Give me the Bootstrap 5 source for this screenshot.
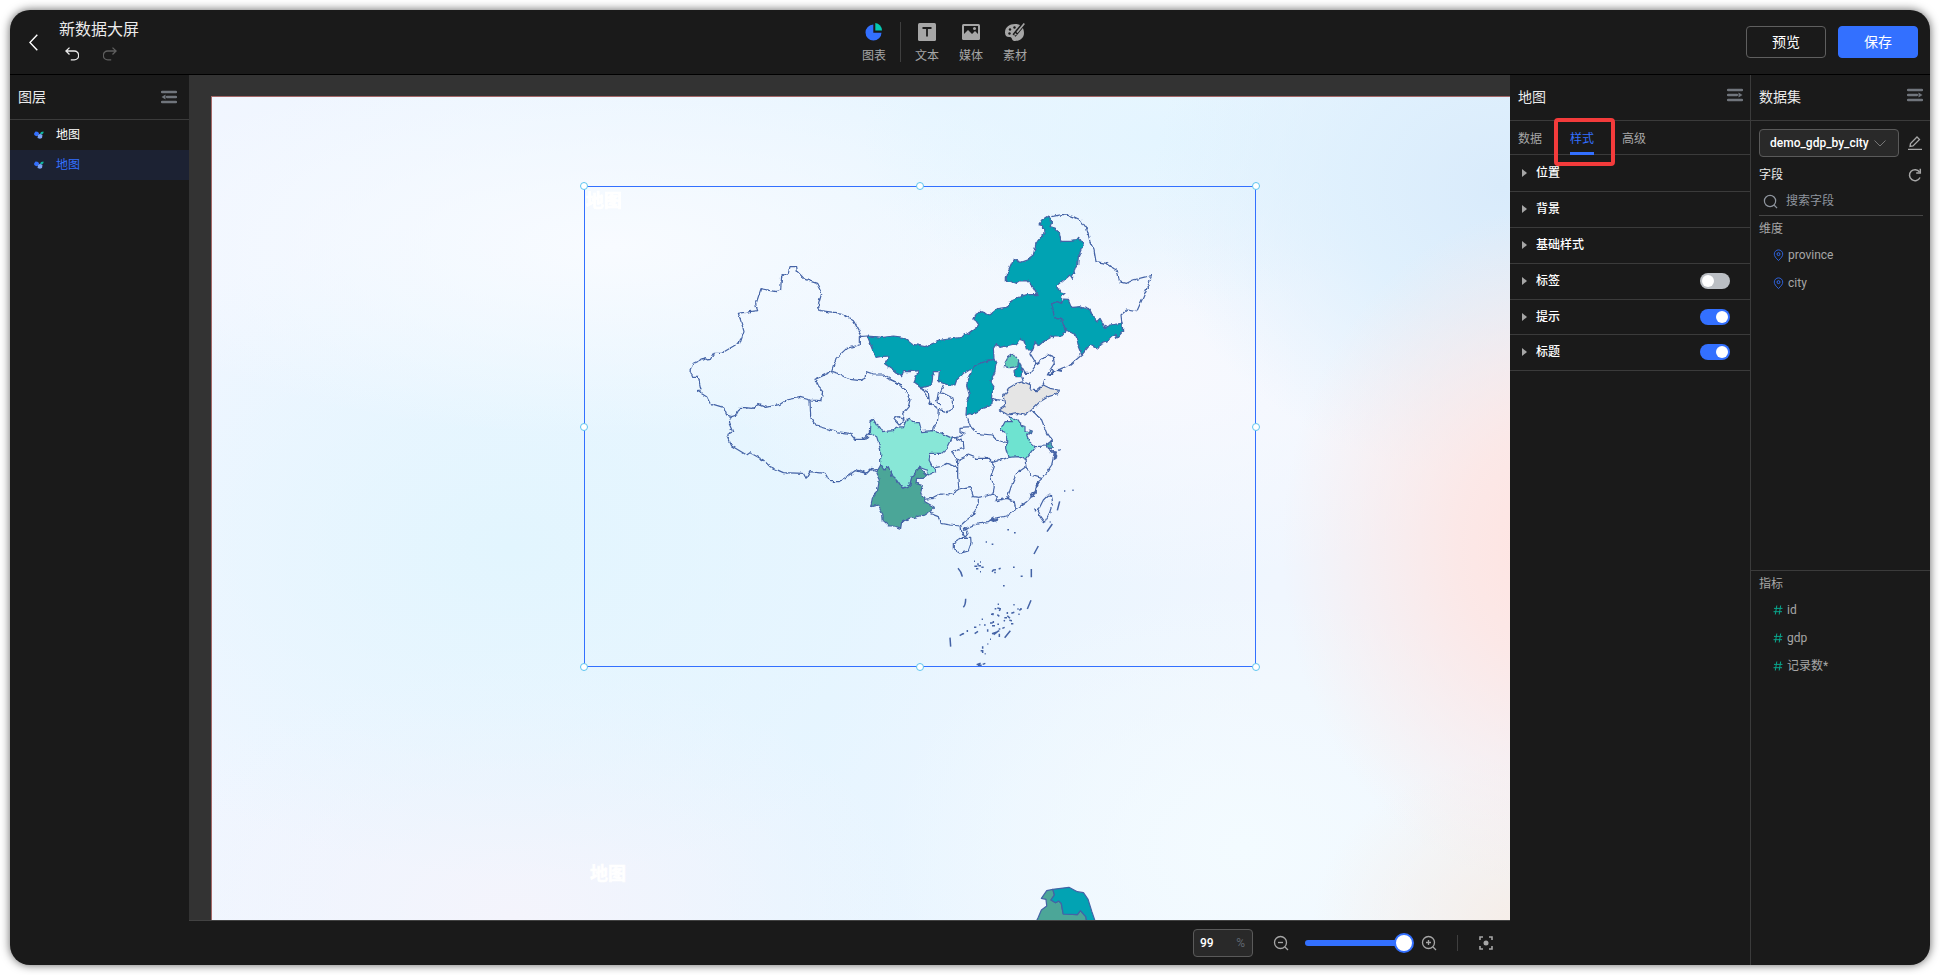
<!DOCTYPE html>
<html lang="zh-CN">
<head>
<meta charset="utf-8">
<title>新数据大屏</title>
<link rel="stylesheet" href="https://cdn.jsdelivr.net/npm/bootstrap@5.3.0/dist/css/bootstrap.min.css">
<style>
:root{--ink:#1a1a1a;--line:#3b3b3b;--accent:#3370ff;--muted:#a6a6a6}
body{width:1940px;height:975px;overflow:hidden;background:#fff;color:#ebebeb;font:12px/18px Roboto,"Noto Sans CJK SC",sans-serif}
svg{display:block;flex:none}
.fs14{font-size:14px;line-height:22px}
.app{margin:10px;height:955px;width:1920px;background:var(--ink);border-radius:20px;overflow:hidden;box-shadow:0 0 10px rgba(0,0,0,.62)}
.topbar{height:65px;border-bottom:1px solid #000}
.brand{width:852px;padding-left:19px}
.brand h1{font-size:16px;line-height:20px;font-weight:400;margin:10px 0 7px}
.back{margin:24px 24px 0 0}
.history{gap:24px;padding-left:6px}
.tool{width:44px;color:var(--muted);gap:6px;padding-top:13px}
.tool svg{margin:0 auto}
.vline{width:1px;background:#3f3f3f}
.action{width:80px;height:32px;border-radius:4px;font-size:14px;padding:0;color:#fff;border:1px solid #5f5f5f;line-height:30px}
.action.save{background:var(--accent);border-color:var(--accent)}
.layers{width:179px}
.panel-title{height:45px;border-bottom:1px solid var(--line);padding:0 12px 0 8px}
.panel-title.tall{height:46px;padding:0 7px 2px 8px;color:#ebebeb}
.tall svg{transform:scaleX(-1);margin-top:-4px}
.layer-row{height:30px;padding-left:24px;gap:12px;color:#fff}
.layer-row.on{background:#1c2233;color:var(--accent)}
.stage{width:1321px;background:#333;position:relative;padding:21px 0 0 22px}
.artboard{height:824px;border:solid #a56868;border-width:1px 0 0 1px;position:relative;overflow:hidden;
background:
radial-gradient(ellipse 270px 340px at 1340px 450px,#ffe3e0 0,#fde6e4e0 35%,#fde8e600 100%),
radial-gradient(ellipse 210px 170px at 1310px 830px,#f6ede7 0,#f6ede700 100%),
radial-gradient(ellipse 350px 290px at 1290px 90px,#d9ebfb 0,#dceffdd0 45%,#e4f3fe00 100%),
radial-gradient(ellipse 300px 170px at 950px 40px,#e4f5ff 0,#e4f5ff00 100%),
radial-gradient(ellipse 420px 220px at 930px 270px,#f8f9fe 0,#f8f9fe00 100%),
radial-gradient(ellipse 540px 190px at 400px 150px,#f8fbff 0,#f8fbff00 100%),
radial-gradient(ellipse 480px 330px at 300px 450px,#e2f5fe 0,#e2f4ff00 100%),
radial-gradient(ellipse 400px 260px at 300px 820px,#f4f4fc 0,#f4f4fc00 100%),
radial-gradient(ellipse 360px 260px at 1030px 750px,#f3fbff 0,#f3fbff00 100%),
linear-gradient(100deg,#f1f6ff 0,#e7f5ff 50%,#f0f6fe 80%)}
.widget{position:absolute}
.widget b{position:absolute;left:2px;top:3px;color:#fff;font-size:18px;line-height:24px;font-weight:700;-webkit-text-stroke:.6px #fff}
.picked{outline:1px solid var(--accent);outline-offset:-1px}
.grip{position:absolute;width:8px;height:8px;border-radius:50%;background:#fff;border:1px solid #5cc4ef;transform:translate(-50%,-50%)}
.map path{stroke:#4463a6;stroke-width:1.2;vector-effect:non-scaling-stroke;stroke-linejoin:round;fill:none}
.map .t{fill:#02a3b3}.map .g{fill:#4ca698}
.zoombar{height:45px;border-top:1px solid #424242;padding-left:1004px}
.zoom-value{width:60px;height:28px;border:1px solid #5a5a5a;border-radius:4px;background:#292929;padding:0 7px 0 6px;color:#fff;font-weight:500}
.slider{width:99px;height:6px;border-radius:3px;background:var(--accent);position:relative}
.thumb{position:absolute;left:89px;top:-7px;width:20px;height:20px;border-radius:50%;background:#fff;border:2px solid var(--accent)}
.props{width:240px}
.tabs{height:34px;border-bottom:1px solid var(--line);padding-left:8px;gap:28px;color:var(--muted);position:relative}
.tabs .on{color:var(--accent);box-shadow:inset 0 -3px var(--accent)}
.tabs span{height:34px;line-height:36px}
.callout-box{position:absolute;left:44px;top:-3px;width:61px;height:48px;border:4px solid #f33b3b;border-radius:4px}
.prop{height:36px;border-bottom:1px solid var(--line);padding:0 20px 1px 12px;color:#fff;font-weight:500}
.prop:nth-of-type(3){height:37px;padding-bottom:0}.prop.short{height:35px;padding-bottom:0}
.caret{border:4px solid transparent;border-left:5px solid #a6a6a6;border-right:0;margin-right:9px}
.switch{width:30px;height:16px;border-radius:8px;background:#bbbfc4;padding:2px}
.switch i{display:block;width:12px;height:12px;border-radius:50%;background:#fff}
.switch.yes{background:var(--accent)}.switch.yes i{margin-left:14px}
.data{width:180px;border-left:1px solid var(--line);color:var(--muted)}
.picker{width:140px;height:28px;border:1px solid #5a5a5a;border-radius:4px;background:#292929;color:#fff;font-weight:500;padding:0 12px 0 10px}
.search{height:30px;margin:1px 7px 0 8px;border-bottom:1px solid #464646;padding:1px 0 0 4px;gap:8px;color:#8f959e}
.field{height:28px;padding-left:22px;gap:4px}
.dims{height:355px;border-bottom:1px solid var(--line)}
</style>
<script src="https://cdn.jsdelivr.net/npm/bootstrap@5.3.0/dist/js/bootstrap.bundle.min.js"></script>
</head>
<body>
<svg width="0" height="0" class="position-absolute">
<defs>
<filter id="coast" x="0" y="0" width="100%" height="100%"><feTurbulence type="fractalNoise" baseFrequency=".19" numOctaves="2" seed="4"/><feDisplacementMap in="SourceGraphic" scale="4" xChannelSelector="R" yChannelSelector="G"/></filter>
<symbol id="fold" viewBox="0 0 16 14"><path d="M1 2h14M6 7h9M1 12h14" stroke="#70757c" stroke-width="2.300" stroke-linecap="round"/><path d="M.5 7l4-2.500v5z" fill="#70757c"/></symbol>
<symbol id="cluster" viewBox="0 0 10 8"><path d="M0 2.500l1.500-2 2 .2L5 2l-.5 2.500-2.300.7L.3 4z" fill="#3370ff"/><path d="M6 3l1-2 2.500-.6V2L8 3.500z" fill="#10b7a1"/><path d="M4 4l2-1.200L8.500 4 8 7l-2 .8L3.500 7z" fill="#7da3f5"/></symbol>
<symbol id="pin" viewBox="0 0 12 14"><path d="M6 12.500C3 9.800 1.400 7.600 1.400 5.500a4.600 4.600 0 019.200 0c0 2.100-1.600 4.300-4.600 7z" fill="none" stroke="#3370ff" opacity=".9"/><circle cx="6" cy="5.500" r="1.600" fill="none" stroke="#3370ff"/></symbol>
<symbol id="hash" viewBox="0 0 10 10"><path d="M3.800.5l-1.500 9M7.700.5l-1.500 9M1 3.400h8.500M.5 6.700H9" stroke="#0aa58c" fill="none"/></symbol>
<symbol id="lens" viewBox="0 0 16 16"><circle cx="7.500" cy="7.500" r="6" fill="none" stroke="currentColor" stroke-width="1.300"/><path d="M12 12l3 3" stroke="currentColor" stroke-width="1.300"/></symbol>
</defs></svg>

<div class="app d-flex flex-column">
<header class="topbar d-flex flex-shrink-0">
  <div class="brand d-flex">
    <svg class="back" width="9" height="17" viewBox="0 0 9 17" fill="none" stroke="#fff" stroke-width="1.400"><path d="M8.300.7L.9 8.500l7.400 7.800"/></svg>
    <div style="margin-left:-3px"><h1>新数据大屏</h1>
      <div class="history d-flex">
        <svg width="14" height="14" viewBox="0 0 14 14" fill="none" stroke="#ebebeb" stroke-width="1.300"><path d="M4.500.6L.9 4l3.600 3.500M1 4h8.200a4.400 4.400 0 010 8.900H5.800"/></svg>
        <svg width="14" height="14" viewBox="0 0 14 14" fill="none" stroke="#5f5f5f" stroke-width="1.300"><path d="M9.500.6L13.100 4 9.500 7.500M13 4H4.800a4.400 4.400 0 000 8.900h3.400"/></svg>
      </div></div>
  </div>
  <div class="tool d-flex flex-column" style="width:24px"><svg width="18" height="18" viewBox="0 0 18 18"><path d="M8.300 1.500v8.200h8.200A8 8 0 118.300 1.500z" fill="#3370ff"/><path d="M10.300 0A7.500 7.500 0 0117 7.500h-6.700z" fill="#04c9b2"/></svg><span>图表</span></div>
  <div class="vline" style="height:40px;margin:12px 4px 0 14px"></div>
  <div class="tool d-flex flex-column text-center"><svg width="18" height="18"><rect width="18" height="18" rx="1.500" fill="#a6a6a6"/><path d="M4.500 5h9M9 5v8.500" stroke="#1a1a1a" stroke-width="1.800"/></svg><span>文本</span></div>
  <div class="tool d-flex flex-column text-center"><svg width="18" height="18"><rect y="1" width="18" height="16" rx="1.500" fill="#a6a6a6"/><path d="M2 3h14v8l-3-3-3 3-4-4-4 4z" fill="#1a1a1a"/><circle cx="12.500" cy="5.500" r="1.500" fill="#a6a6a6"/></svg><span>媒体</span></div>
  <div class="tool d-flex flex-column text-center"><svg width="20" height="18" viewBox="0 0 20 18"><path d="M10 1C4.500 1 0 4 0 9.500c0 3 1.500 4.500 4 4.500 2 0 2.500.5 3 2 .5 1.500 1.500 2 3 2 5 0 9-3 9-8C19 4 15.500 1 10 1z" fill="#a6a6a6"/><g fill="#1a1a1a"><circle cx="5" cy="6.500" r="1.200"/><circle cx="9.500" cy="4.500" r="1.200"/><circle cx="4.500" cy="10.500" r="1.200"/></g><path d="M19 .5L9 12.500" stroke="#1a1a1a" stroke-width="4"/><path d="M19.300.5L12 9.500" stroke="#a6a6a6" stroke-width="1.700"/><path d="M9 13l1-3 2 1.500z" fill="#a6a6a6"/></svg><span>素材</span></div>
  <div class="d-flex ms-auto" style="gap:12px;padding:16px 12px"><button class="btn action">预览</button><button class="btn action save">保存</button></div>
</header>

<div class="d-flex" style="height:890px">
  <aside class="layers">
    <div class="panel-title d-flex align-items-center justify-content-between fs14"><span>图层</span><svg width="16" height="14"><use href="#fold"/></svg></div>
    <div class="layer-row d-flex align-items-center"><svg width="10" height="8"><use href="#cluster"/></svg>地图</div>
    <div class="layer-row on d-flex align-items-center"><svg width="10" height="8"><use href="#cluster"/></svg>地图</div>
  </aside>

  <main class="d-flex flex-column h-100">
    <div class="stage flex-grow-1 overflow-hidden">
      <div class="artboard">
        <div class="widget picked" style="left:372px;top:89px;width:672px;height:481px">
          <svg class="map" width="672" height="481" viewBox="584 186 672 481">
            <g filter="url(#coast)">
            <g transform="translate(570 170) scale(.33333)">
              <path d="M875 497L850 452 815 430 750 422 745 405 755 370 740 340 705 328 682 305 680 290 660 290 655 310 635 318 632 360 620 365 573 356 557 405 563 422 505 430 515 460 522 485 512 515 455 550 432 550 420 570 405 563 370 580 360 600 368 622 385 622 393 660 380 662 410 680 420 700 460 712 470 735 485 740 500 735 512 712 550 715 565 703 590 712 630 703 650 690 690 682 720 690 752 692 758 665 745 650 735 628 785 605 798 565 830 535 868 525 868 500 892 498"/>
              <path d="M485 740L475 755 488 785 470 795 485 828 530 855 540 848 580 870 600 890 640 908 700 910 708 925 720 905 765 910 780 935 810 935 855 902 890 910 905 895 925 900M720 690L722 740 740 768 800 785 840 790 855 808 885 808 900 790M785 605L810 612 840 628 870 632 885 625 888 605 910 612 935 612 960 628 990 642"/>
            </g>
            <g transform="translate(860 200) scale(.33333)">
              <path d="M574 50L610 43 640 50 662 60 680 85 690 125 702 150 708 185 740 190 755 200 772 212 778 245 800 250 820 240 850 232 875 226 862 262 850 290 830 335 800 330 783 345 788 390M665 465L630 495 605 505 562 525 570 510 583 490 580 470 565 463 545 480 530 492 510 460 518 450M530 492L510 520 495 520 485 503"/>
              <path class="t" d="M22 408L70 412 100 408 130 412 155 432 195 440 245 420 300 413 325 400 355 377 342 358 348 340 360 334 390 345 412 326 440 322 460 297 500 284 532 284 520 262 500 242 480 243 470 250 455 244 436 244 436 232 460 178 480 187 500 180 520 165 528 130 552 100 550 78 536 74 545 60 560 50 574 55 574 70 570 80 585 84 598 100 603 124 630 124 648 122 656 112 670 132 655 170 653 195 645 205 637 235 630 225 590 260 600 275 615 280 605 288 605 310 590 305 575 312 583 330 585 352 605 360 612 380 618 395 605 408 580 408 550 425 535 438 525 424 518 450 500 450 492 420 480 415 470 430 445 436 420 442 410 430 400 445 402 478 375 482 350 500 335 510 325 510 310 520 290 540 285 555 265 555 235 545 238 515 220 515 215 555 185 563 162 545 175 512 150 515 130 515 125 530 100 510 75 492 88 468 60 470 48 472 35 440z"/>
              <path class="t" d="M575 312L590 305 605 310 612 297 625 298 635 322 660 320 690 330 700 352 710 365 720 355 735 382 750 375 785 370 788 395 770 415 765 402 745 420 720 430 715 448 690 435 665 465 655 440 648 405 618 390 605 358 585 355z"/>
              <path style="fill:#5fcdb9" d="M460 460L473 478 472 500 450 503 433 500 436 487 445 470z"/>
              <path class="t" d="M472 487L480 490 488 515 482 530 468 530 462 515 470 508z"/>
            </g>
            <g transform="translate(860 370) scale(.33333)">
              <path d="M90 28L120 42 135 60 150 90 145 110 128 130 132 150 120 165 102 145 115 140 130 148M180 55L205 65 208 95 235 118 260 125 280 115 280 85 250 70 235 68 230 95 240 105M185 55L205 85 212 102 230 112M250 45L240 68M235 118L232 160 220 170 217 185M275 200L310 215 312 235 275 245 290 265 293 275M318 134L332 170 300 172 300 185 315 190 300 200 275 205M332 170L350 190 395 195 410 210 440 218M392 85L428 92M293 270L325 255 350 265 388 265 395 278 447 262M495 268L498 290 470 310 455 345 442 385M395 278L403 290 392 320 403 350 398 375M293 270L293 320 297 357M207 282L215 295 240 290 260 280 285 290 293 300M190 388L220 385 245 372 270 375 297 357 330 350 340 380 355 382 355 400 340 435 320 450 303 465M355 382L380 378 398 372 412 380 408 392 440 385 462 392 468 418M210 430L235 440 240 460 270 465 303 468 305 485 315 502 324 490 316 475 340 465 380 458 400 445 440 438 468 418 500 395 525 370 530 340 550 322 575 285 583 250 562 235M498 290L510 315 545 325M515 120L545 150 560 190 578 215M525 230L560 228M485 20L490 35M555 28L550 45M0 210L15 203 28 188M0 300L20 310 32 298 48 305"/>
              <path class="t" d="M335 0L345 -13 375 -25 402 -32 408 -20 405 5 390 35 402 50 395 80 392 108 370 115 345 128 318 134 320 100 328 75 320 45z"/>
              <path style="fill:#e5e5e5" d="M430 80L445 55 470 40 490 35 512 45 510 60 530 62 550 45 570 55 595 60 592 72 565 80 540 95 515 120 495 135 470 130 445 135 418 120 435 108z"/>
              <path style="fill:#88e7d7" d="M28 188L30 155 42 148 55 170 65 185 100 182 108 172 130 170 138 152 150 145 160 158 178 158 185 185 215 182 245 190 277 205 262 235 245 250 210 250 207 270 215 285 228 305 205 315 200 300 178 292 168 310 155 325 150 345 128 355 110 330 95 315 85 295 70 300 62 285 62 240 50 200z"/>
              <path class="g" d="M62 285L72 300 85 290 95 315 110 328 128 355 150 345 155 322 178 292 185 300 200 315 190 325 170 325 168 340 187 347 182 368 195 395 223 412 210 425 195 435 150 445 125 455 122 475 100 468 85 468 70 455 68 430 55 405 32 410 38 380 52 365 58 330 48 310z"/>
              <path style="fill:#6ee3d0" d="M450 140L475 150 482 165 495 170 495 185 508 190 500 195 508 215 525 230 510 250 495 268 475 260 447 262 440 235 440 190 422 180 435 155 455 155z"/>
              <path style="fill:#47aeb1" d="M558 225L575 212 580 235 562 235zM508 180l9 3-3 8-8-3z"/>
              <path d="M575 377L578 400 568 430 553 458 540 440 535 420 550 390 565 375zM280 518L300 505 332 505 333 520 325 543 300 550 280 538z"/>
              <path d="M578 246l10 1-3 8 4 5-8 3 4-12M528 345l9-6-6 13M510 375l14-8-3 12-10 0M388 450l12-7 0 10 14-6M565 15l15-6-5-9M590 -1l16 4M524 420l4 3M595 238h5M575 210v6M312 480l10-2" style="stroke-width:2"/>
            </g></g>
            <g transform="translate(900 520) scale(.33333)">
              <path d="M457 12L441 35M415 78L402 102M394 147V172M393 241L382 267M331 332L314 353M174 145Q184 155 187 170M197 236Q197 254 190 262M150 353L152 380M479 -56L472 -29" style="stroke-width:1.500"/>
              <path d="M322 29h5M342 38h5M257 66h4M275 73h5M222 124h3M240 126h3M223 139h9M235 137h8M228 146h7M244 142h7M234 130v6M240 155h3M276 155l4-5 8-1M284 160l2-5M296 147l6-2M339 142h5M362 169h6M309 197h5M293 253h4M284 266h5M292 264l9 2-3 7M273 283h4M279 279v7M292 284l6 5M340 254h4M352 267h4M358 271l4-3M363 264v6M334 280l9-3M355 283h4M313 293h8M322 287l8 8M328 301l8 1M311 301l4 2M322 276v6M333 311h7M270 309h8M280 303v6M276 317h9M292 313h5M245 298h4M238 314h3M252 315h5M222 322h7M224 341l10-7M179 347l10-6M187 343l5-3M202 330v6M263 328v7M276 341l13-4M281 344l11-8M290 336l8-4M296 327h5M307 325l7-3M298 341v10M270 358h3M262 372h3M248 379v7M242 392h8M248 390v9M254 401h3M230 434l12-4M234 436h11M248 433l8-3M429 5h7M449 6h3M492 -87h4M517 -89h4" style="stroke-width:1.500"/>
            </g>
          </svg>
          <b>地图</b>
          <i class="grip" style="left:0;top:0"></i><i class="grip" style="left:50%;top:0"></i><i class="grip" style="left:100%;top:0"></i><i class="grip" style="left:0;top:50%"></i><i class="grip" style="left:100%;top:50%"></i><i class="grip" style="left:0;top:100%"></i><i class="grip" style="left:50%;top:100%"></i><i class="grip" style="left:100%;top:100%"></i>
        </div>
        <div class="widget" style="left:372px;top:762px;width:672px;height:481px">
          <svg class="map" width="672" height="62" viewBox="584 859 672 62">
            <g transform="translate(560 840) scale(.38265 .33333)">
              <path class="g" d="M1240 255L1250 232 1258 210 1272 198 1270 178 1258 175 1272 152 1288 148 1292 165 1283 180 1295 188 1303 183 1310 190 1315 222 1352 224 1360 212 1374 230 1378 255z"/>
              <path class="t" d="M1288 148L1330 142 1352 155 1368 158 1380 178 1390 215 1398 242 1398 255 1378 255 1374 230 1360 212 1352 224 1315 222 1310 190 1303 183 1295 188 1283 180 1292 165z"/>
            </g>
          </svg>
          <b class="ps-1">地图</b>
        </div>
      </div>
    </div>
    <footer class="zoombar d-flex align-items-center flex-shrink-0">
      <div class="zoom-value d-flex align-items-center justify-content-between">99<span style="color:#5f6670;font-weight:400">%</span></div>
      <svg style="margin:0 16px 0 20px;color:#a6a6a6" width="16" height="16"><use href="#lens"/><path d="M5 7.500h5" stroke="#a6a6a6" stroke-width="1.300"/></svg>
      <div class="slider"><i class="thumb"></i></div>
      <svg style="margin:0 20px 0 17px;color:#a6a6a6" width="16" height="16"><use href="#lens"/><path d="M5 7.500h5M7.500 5v5" stroke="#a6a6a6" stroke-width="1.300"/></svg>
      <div class="vline" style="height:16px"></div>
      <svg style="margin-left:21px" width="14" height="14" fill="none" stroke="#a6a6a6" stroke-width="1.600"><path d="M1 4V1h3M10 1h3v3M13 10v3h-3M4 13H1v-3"/><circle cx="7" cy="7" r="2.500" fill="#a6a6a6" stroke="none"/></svg>
    </footer>
  </main>

  <section class="props">
    <div class="panel-title tall d-flex align-items-center justify-content-between fs14"><span>地图</span><svg width="16" height="14"><use href="#fold"/></svg></div>
    <div class="tabs d-flex"><span>数据</span><span class="on">样式</span><span>高级</span><div class="callout-box"></div></div>
    <div class="prop d-flex align-items-center"><i class="caret"></i>位置</div>
    <div class="prop d-flex align-items-center"><i class="caret"></i>背景</div>
    <div class="prop d-flex align-items-center"><i class="caret"></i>基础样式</div>
    <div class="prop d-flex align-items-center"><i class="caret"></i>标签<div class="switch ms-auto"><i></i></div></div>
    <div class="prop short d-flex align-items-center"><i class="caret"></i>提示<div class="switch yes ms-auto"><i></i></div></div>
    <div class="prop d-flex align-items-center"><i class="caret"></i>标题<div class="switch yes ms-auto"><i></i></div></div>
  </section>

  <section class="data">
    <div class="panel-title tall d-flex align-items-center justify-content-between fs14"><span>数据集</span><svg width="16" height="14"><use href="#fold"/></svg></div>
    <div class="d-flex align-items-center p-2"><div class="picker d-flex align-items-center justify-content-between">demo_gdp_by_city<svg width="12" height="7" fill="none" stroke="#777"><path d="M.5.5L6 6 11.500.5"/></svg></div>
      <svg class="ms-auto" width="14" height="14" fill="none" stroke="#a6a6a6" stroke-width="1.300"><path d="M0 13.300h14M2 10.500l.5-3L9 1l2.500 2.500L5 10z"/></svg></div>
    <div class="d-flex align-items-center justify-content-between" style="padding:0 8px;height:20px;color:#ebebeb"><span>字段</span><svg width="14" height="14" fill="none" stroke="#a6a6a6" stroke-width="1.500"><path d="M12 9.500A5.500 5.500 0 1111.500 4"/><path d="M12.300.8V5H8.200"/></svg></div>
    <div class="search d-flex align-items-center"><svg width="15" height="15" viewBox="0 0 16 16"><use href="#lens"/></svg>搜索字段</div>
    <div class="dims"><div style="padding:4px 8px 3px;height:25px">维度</div>
      <div class="field d-flex align-items-center"><svg width="11" height="13" viewBox="0 0 12 14"><use href="#pin"/></svg>province</div>
      <div class="field d-flex align-items-center"><svg width="11" height="13" viewBox="0 0 12 14"><use href="#pin"/></svg>city</div></div>
    <div style="padding:4px 8px 0;height:25px">指标</div>
    <div class="field d-flex align-items-center"><svg width="10" height="10"><use href="#hash"/></svg>id</div>
    <div class="field d-flex align-items-center"><svg width="10" height="10"><use href="#hash"/></svg>gdp</div>
    <div class="field d-flex align-items-center"><svg width="10" height="10"><use href="#hash"/></svg>记录数*</div>
  </section>
</div>
</div>
</body>
</html>
